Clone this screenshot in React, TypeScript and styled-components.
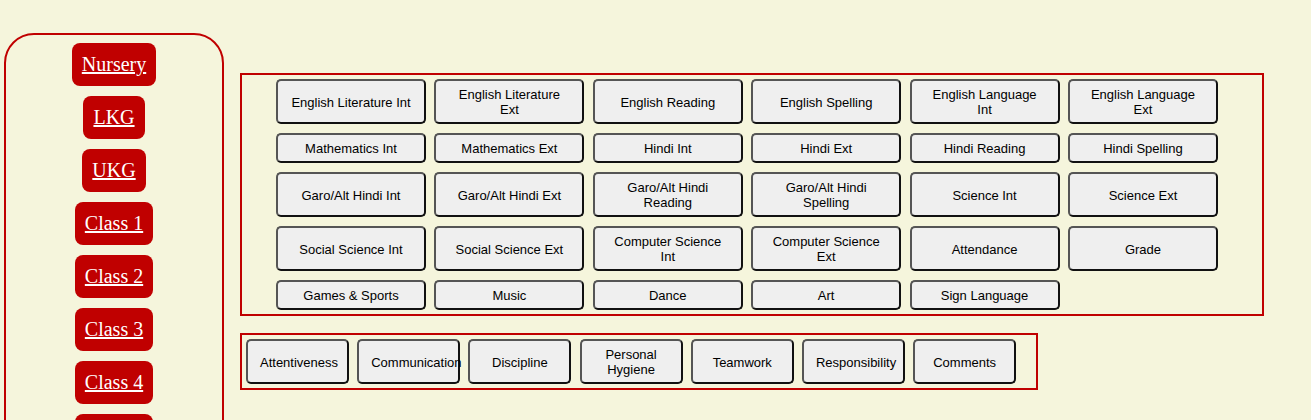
import React from "react";
import styled, { createGlobalStyle } from "styled-components";

const GlobalStyle = createGlobalStyle`
  html, body {
    margin: 0;
    padding: 0;
    background: #f5f5dc;
  }
  body {
    font-family: "Liberation Serif", "Times New Roman", serif;
    overflow: hidden;
  }
`;

const Page = styled.div`
  display: flex;
  align-items: flex-start;
  gap: 16px;
  padding: 33px 0 0 4px;
`;

const Sidebar = styled.nav`
  box-sizing: border-box;
  width: 220px;
  border: 2px solid #c00000;
  border-radius: 30px;
  padding: 8px 0 20px;
  display: flex;
  flex-direction: column;
  align-items: center;
  gap: 10px;
`;

const ClassLink = styled.a`
  display: block;
  background: #c00000;
  color: #ffffff;
  font-family: "Liberation Serif", "Times New Roman", serif;
  font-size: 20px;
  line-height: 23px;
  padding: 10px;
  border-radius: 8px;
  text-decoration: underline;
  cursor: pointer;
`;

const Main = styled.div`
  margin-top: 40px;
  display: flex;
  flex-direction: column;
  align-items: flex-start;
  gap: 17px;
`;

const Panel = styled.div<{ $width: number; $cols: number; $colWidth: number; $colGap: number; $padLeft: number }>`
  box-sizing: border-box;
  width: ${(p) => p.$width}px;
  border: 2px solid #c00000;
  padding: 4px 4px 4px ${(p) => p.$padLeft}px;
  display: grid;
  grid-template-columns: repeat(${(p) => p.$cols}, ${(p) => p.$colWidth}px);
  column-gap: ${(p) => p.$colGap}px;
  row-gap: 9px;
`;

const SubjectButton = styled.button`
  box-sizing: border-box;
  min-height: 30px;
  padding: 6px 12px 5px;
  background: #efefef;
  color: #000;
  border: 2px solid;
  border-color: #555555 #111111 #111111 #555555;
  border-radius: 5px;
  font-family: "Liberation Sans", Arial, sans-serif;
  font-size: 13px;
  line-height: 15px;
  text-align: center;
  cursor: pointer;
`;

const classes = [
  "Nursery",
  "LKG",
  "UKG",
  "Class 1",
  "Class 2",
  "Class 3",
  "Class 4",
  "Class 5",
  "Class 6",
  "Class 7",
  "Class 8",
];

const subjects = [
  "English Literature Int",
  "English Literature Ext",
  "English Reading",
  "English Spelling",
  "English Language Int",
  "English Language Ext",
  "Mathematics Int",
  "Mathematics Ext",
  "Hindi Int",
  "Hindi Ext",
  "Hindi Reading",
  "Hindi Spelling",
  "Garo/Alt Hindi Int",
  "Garo/Alt Hindi Ext",
  "Garo/Alt Hindi Reading",
  "Garo/Alt Hindi Spelling",
  "Science Int",
  "Science Ext",
  "Social Science Int",
  "Social Science Ext",
  "Computer Science Int",
  "Computer Science Ext",
  "Attendance",
  "Grade",
  "Games & Sports",
  "Music",
  "Dance",
  "Art",
  "Sign Language",
];

const traits = [
  "Attentiveness",
  "Communication",
  "Discipline",
  "Personal Hygiene",
  "Teamwork",
  "Responsibility",
  "Comments",
];

export default function App() {
  return (
    <>
      <GlobalStyle />
      <Page>
        <Sidebar>
          {classes.map((c) => (
            <ClassLink key={c}>{c}</ClassLink>
          ))}
        </Sidebar>
        <Main>
          <Panel $width={1024} $cols={6} $colWidth={150} $colGap={8.4} $padLeft={34}>
            {subjects.map((s) => (
              <SubjectButton key={s}>{s}</SubjectButton>
            ))}
          </Panel>
          <Panel $width={798} $cols={7} $colWidth={103} $colGap={8.2} $padLeft={4}>
            {traits.map((t) => (
              <SubjectButton key={t}>{t}</SubjectButton>
            ))}
          </Panel>
        </Main>
      </Page>
    </>
  );
}
